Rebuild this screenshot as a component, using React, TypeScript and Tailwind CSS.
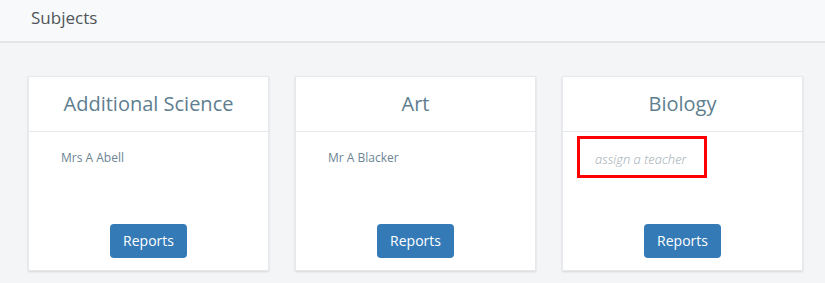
import React from "react";

const cards = [
  { title: "Additional Science", teacher: "Mrs A Abell" },
  { title: "Art", teacher: "Mr A Blacker" },
  { title: "Biology", teacher: null },
];

export default function App() {
  return (
    <div
      className="w-[825px] h-[283px] bg-[#f4f5f7] overflow-hidden"
      style={{ fontFamily: '"Open Sans", "Noto Sans", sans-serif' }}
    >
      <div className="h-[43px] bg-[#f8f9fa] border-b-2 border-[#e3e5e8] pl-[31px] flex items-center">
        <span className="text-[17px] text-[#4f5559] leading-none -mt-[6px]">Subjects</span>
      </div>
      <div className="flex gap-[26px] pl-[28px] pt-[33px]">
        {cards.map((c) => (
          <div
            key={c.title}
            className="w-[241px] bg-white border border-[#e6e8eb] shadow-[0_1px_2px_rgba(0,0,0,0.12)] flex flex-col"
          >
            <div className="h-[55px] border-b border-[#e6e8eb] flex items-center justify-center">
              <span className="text-[20px] text-[#5e7e8f] leading-none">{c.title}</span>
            </div>
            <div className="h-[138px] flex flex-col relative">
              {c.teacher ? (
                <div className="pl-[32px] pt-[19px] text-[12px] text-[#6c8494] leading-[14px]">{c.teacher}</div>
              ) : (
                <div className="relative pl-[32px] pt-[19px] text-[13px] italic font-light text-[#a0abb2] leading-[16px]">
                  assign a teacher
                  <div className="absolute left-[14px] top-[4px] w-[130px] h-[42px] border-[3px] border-[#ff0000]" />
                </div>
              )}
              <div className="mt-auto mb-[12px] flex justify-center">
                <button className="w-[77px] h-[34px] bg-[#337ab7] rounded-[4px] text-white text-[14px] leading-none">
                  Reports
                </button>
              </div>
            </div>
          </div>
        ))}
      </div>
    </div>
  );
}
